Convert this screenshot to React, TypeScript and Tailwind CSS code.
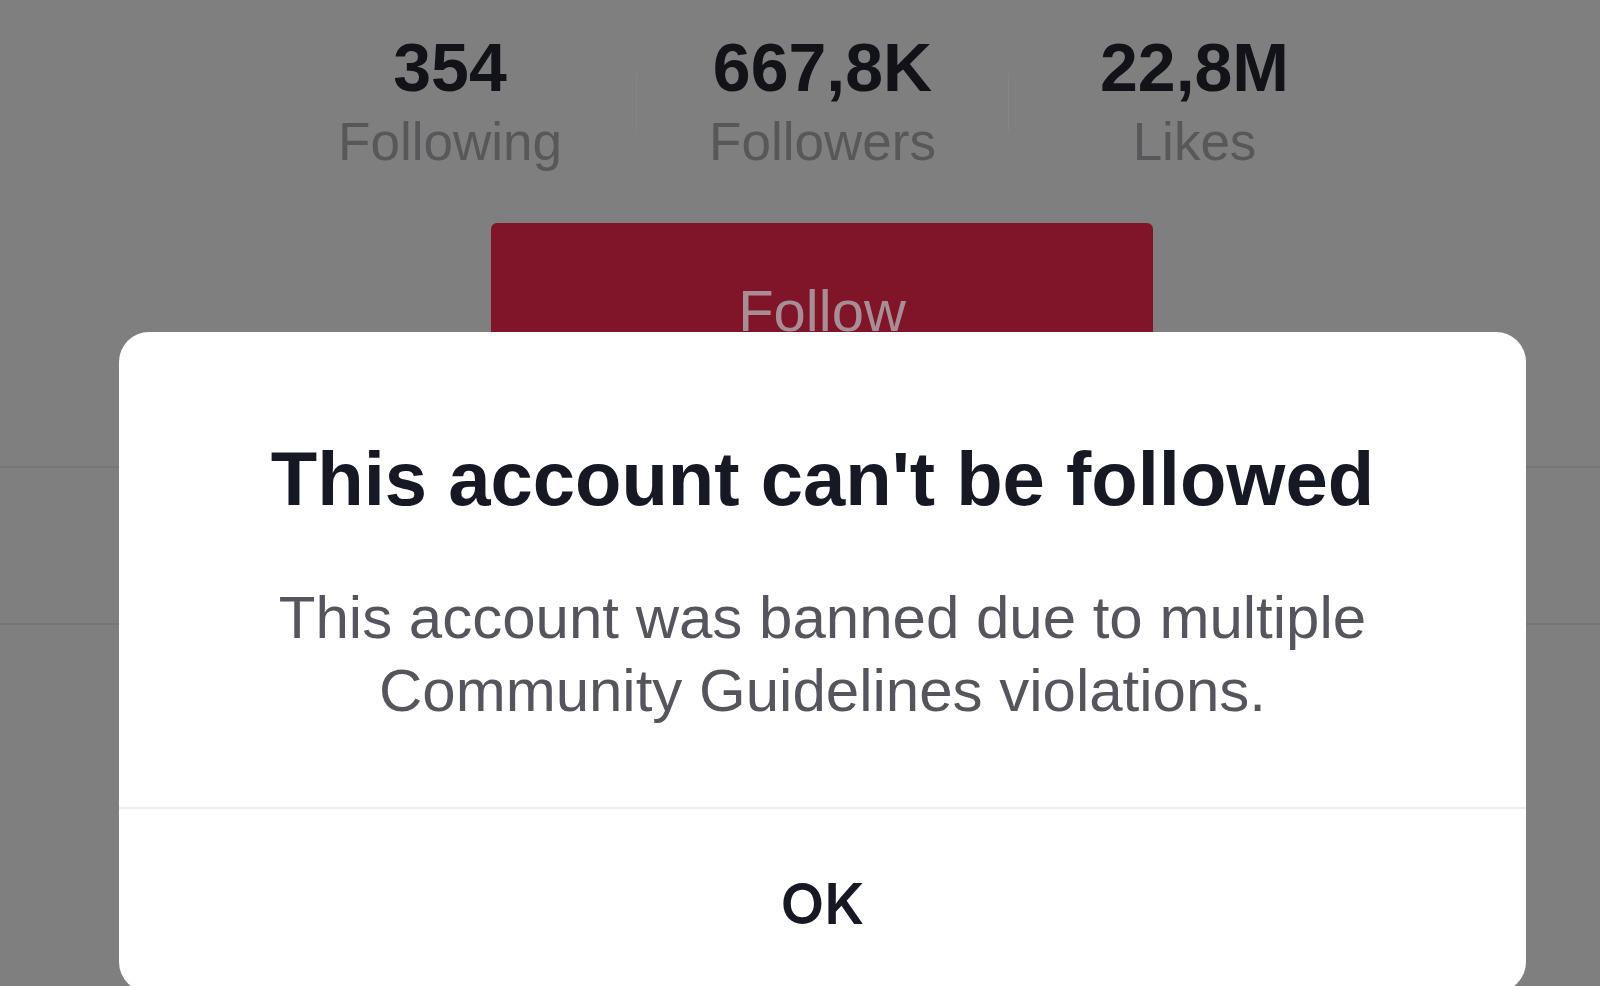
import React from 'react';

const stats = [
  { value: '354', label: 'Following' },
  { value: '667,8K', label: 'Followers' },
  { value: '22,8M', label: 'Likes' },
];

export default function App() {
  return (
    <div
      className="relative h-[986px] w-[1600px] overflow-hidden bg-[#7f7f7f]"
      style={{ fontFamily: '"Liberation Sans", Arial, sans-serif' }}
    >
      {/* Dimmed profile behind the dialog */}
      <div className="flex flex-col">
        <div className="ml-[264px] flex pt-[27px]">
          {stats.map((s, i) => (
            <div key={s.label} className="flex">
              {i > 0 && <div className="mt-[46px] h-[58px] w-px bg-[#858585]" />}
              <div className={`flex flex-col items-center ${i > 0 ? 'w-[371px]' : 'w-[372px]'}`}>
                <span className="text-[68px] font-bold leading-[80px] text-[#121318]">{s.value}</span>
                <span className="mt-[3px] text-[53px] leading-[64px] text-[#58585a]">{s.label}</span>
              </div>
            </div>
          ))}
        </div>

        <div className="ml-[491px] mt-[49px] flex h-[130px] w-[662px] justify-center rounded-[6px] bg-[#80152a] pt-[55px]">
          <span className="text-[58px] leading-[66px] text-[#a98d95]">Follow</span>
        </div>

        <div className="mt-[113px] h-[2px] w-full bg-[#767676]" />
        <div className="mt-[155px] h-[2px] w-full bg-[#767676]" />
      </div>

      {/* Alert dialog */}
      <div className="absolute left-[119px] top-[332px] flex h-[660px] w-[1407px] flex-col rounded-[30px] bg-white">
        <h1 className="pt-[102px] text-center text-[76px] font-bold leading-[90px] text-[#161823]">
          This account can't be followed
        </h1>
        <p className="mt-[57px] text-center text-[60px] leading-[73px] text-[#55565d]">
          This account was banned due to multiple
          <br />
          Community Guidelines violations.
        </p>
        <div className="mt-[80px] h-[2px] w-full bg-[#ececec]" />
        <div className="flex justify-center pt-[60px]">
          <span
            className="text-[57px] font-semibold leading-[70px] text-[#161823]"
            style={{ fontFamily: 'Inter, "Liberation Sans", sans-serif' }}
          >
            OK
          </span>
        </div>
      </div>
    </div>
  );
}
